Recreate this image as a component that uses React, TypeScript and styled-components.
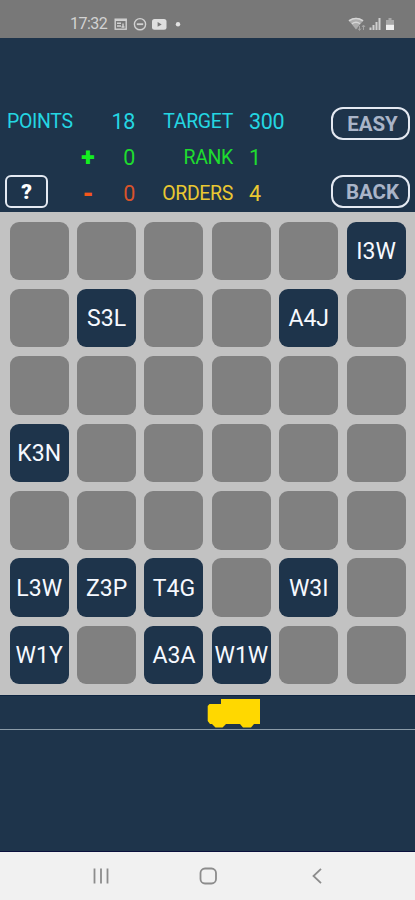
import React from 'react';
import styled, { createGlobalStyle } from 'styled-components';

const NAVY = '#1e344b';

const GlobalStyle = createGlobalStyle`
  * { box-sizing: border-box; }
  body { margin: 0; background: ${NAVY}; font-family: Roboto, "Liberation Sans", sans-serif; }
`;

const Screen = styled.main`
  width: 415px;
  height: 900px;
  display: flex;
  flex-direction: column;
  overflow: hidden;
  background: ${NAVY};
`;

const StatusBar = styled.div`
  height: 38px;
  flex: none;
  display: flex;
  align-items: center;
  padding: 10px 17px 0 70px;
  background: #787878;
  color: #d2d2d2;
`;

const Clock = styled.span`
  width: 44px;
  font-size: 16px;
  line-height: 20px;
  letter-spacing: -0.55px;
`;

const Spacer = styled.div`
  flex: 1;
`;

const ScorePanel = styled.header`
  height: 173.5px;
  flex: none;
  display: grid;
  grid-template-columns: 67px 28px 33px 98px 98px 79px;
  grid-template-rows: 36.3px 36.3px 36.3px;
  align-items: center;
  padding: 65.5px 5px 0 7px;
`;

const Label = styled.span<{ $color: string; $col: number; $row: number }>`
  grid-column: ${(p) => p.$col};
  grid-row: ${(p) => p.$row};
  justify-self: ${(p) => (p.$col === 1 ? 'start' : 'end')};
  color: ${(p) => p.$color};
  font-size: 19.5px;
  line-height: 24px;
  white-space: nowrap;
  letter-spacing: -0.35px;
`;

const Value = styled.span<{ $color: string; $col: number; $row: number }>`
  grid-column: ${(p) => p.$col};
  grid-row: ${(p) => p.$row};
  justify-self: ${(p) => (p.$col === 3 ? 'end' : 'start')};
  padding-left: ${(p) => (p.$col === 5 ? 16 : 0)}px;
  color: ${(p) => p.$color};
  font-size: 21.5px;
  line-height: 24px;
  letter-spacing: -0.3px;
`;

const Sign = styled.span<{ $color: string; $row: number }>`
  grid-column: 2;
  grid-row: ${(p) => p.$row};
  justify-self: center;
  color: ${(p) => p.$color};
  font-size: 25px;
  font-weight: 900;
  line-height: 24px;
`;

const PillButton = styled.button<{ $row: number }>`
  grid-column: 6;
  grid-row: ${(p) => p.$row};
  width: 79px;
  height: 33px;
  margin: ${(p) => (p.$row === 1 ? '4px' : '-5px')} 0 0 0;
  padding: 1px 0 0 4px;
  border: 2px solid #e4e9f2;
  border-radius: 12px;
  background: transparent;
  color: #a9b4c8;
  font: 700 20.5px/24px Roboto, sans-serif;
`;

const HelpButton = styled.button`
  grid-column: 1;
  grid-row: 3;
  width: 43px;
  height: 33px;
  margin: -5px 0 0 -2px;
  padding: 0;
  border: 2px solid #e4e9f2;
  border-radius: 6px;
  background: transparent;
  color: #fff;
  font: 900 21px/24px Roboto, sans-serif;
`;

const Board = styled.section`
  height: 483.5px;
  flex: none;
  display: grid;
  grid-template-columns: repeat(6, 59px);
  grid-auto-rows: 58.6px;
  gap: 8.8px 8.4px;
  padding: 10px 0 0 9.7px;
  background: #c2c2c2;
`;

const Tile = styled.div<{ $filled: boolean }>`
  display: flex;
  align-items: center;
  justify-content: center;
  padding-top: 2px;
  border-radius: 9px;
  background: ${(p) => (p.$filled ? NAVY : '#808080')};
  color: #f6f9ff;
  font-size: 23px;
  line-height: 26px;
  white-space: nowrap;
`;

const Road = styled.div`
  height: 34.5px;
  flex: none;
  padding: 2px 0 0 207px;
  border-top: 1px solid #0d2440;
  border-bottom: 1px solid #8b9ba8;

  svg { display: block; }
`;

const NavBar = styled.nav`
  height: 48px;
  flex: none;
  display: flex;
  align-items: center;
  justify-content: space-between;
  padding: 0 86px 0 90px;
  background: #f1f1f1;
  box-shadow: 0 -1px 0 #0a103c;
`;

const HomeIcon = styled.svg`
  margin-right: 3px;
`;

const rows = [
  ['', '', '', '', '', 'I3W'],
  ['', 'S3L', '', '', 'A4J', ''],
  ['', '', '', '', '', ''],
  ['K3N', '', '', '', '', ''],
  ['', '', '', '', '', ''],
  ['L3W', 'Z3P', 'T4G', '', 'W3I', ''],
  ['W1Y', '', 'A3A', 'W1W', '', ''],
];

const Notifications = () => (
  <svg width="70" height="16" viewBox="0 0 70 16" fill="none" stroke="#d2d2d2" strokeWidth="1.4">
    <rect x="1.2" y="3.2" width="11" height="10" />
    <path d="M1 4.2h11.4M3 7.3h4M3 10h4M9 7.5v4M7.5 11h3" />
    <circle cx="26" cy="8.2" r="5.6" />
    <path d="M22.8 8.2h6.4" strokeWidth="1.8" />
    <rect x="38" y="3" width="14.5" height="10.8" rx="2.5" fill="#dedede" stroke="none" />
    <path d="M43.6 6l4.1 2.4-4.1 2.4z" fill="#787878" stroke="none" />
    <circle cx="64" cy="8.2" r="2.2" fill="#e2e2e2" stroke="none" />
  </svg>
);

const SystemIcons = () => (
  <svg width="50" height="16" viewBox="0 0 50 16" fill="#cfcfcf">
    <path d="M.5 4.3C5 .8 11 .8 15.5 4.3L8 13.5z" opacity=".62" />
    <path d="M1 4.8Q8 .2 15 4.8M4 7.8Q8 4.8 12 7.8" fill="none" stroke="#d6d6d6" strokeWidth="1.4" />
    <path d="M11.5 10v4M10 12.5l1.5 2 1.5-2M15.5 14V9.5M14 11l1.5-2 1.5 2" fill="none" stroke="#a6a6a6" />
    <path d="M21.5 11.5h2V14h-2zM24.5 9h2v5h-2zM27.5 6h2v8h-2zM30.5 2h2v12h-2z" />
    <path d="M40.5 2h3v2H46v5h-8V4h2.5z" opacity=".55" />
    <path d="M38 8.8h8V14h-8z" fill="#efefef" />
  </svg>
);

const Van = () => (
  <svg width="54" height="31" viewBox="0 0 54 31" fill="#ffd800">
    <path d="M14 1h39v25h-6l-3 3.5h-8L33 26H19l-3.5 3.5h-7L5 26H3L.7 23V8L2.5 6H14z" />
  </svg>
);

export default function App() {
  return (
    <>
      <GlobalStyle />
      <Screen>
        <StatusBar>
          <Clock>17:32</Clock>
          <Notifications />
          <Spacer />
          <SystemIcons />
        </StatusBar>
        <ScorePanel>
          <Label $color="#24d6e2" $col={1} $row={1}>POINTS</Label>
          <Value $color="#24d6e2" $col={3} $row={1}>18</Value>
          <Label $color="#24d6e2" $col={4} $row={1}>TARGET</Label>
          <Value $color="#24d6e2" $col={5} $row={1}>300</Value>
          <PillButton $row={1}>EASY</PillButton>
          <Sign $color="#14ee20" $row={2}>+</Sign>
          <Value $color="#1fdc2f" $col={3} $row={2}>0</Value>
          <Label $color="#1fdc2f" $col={4} $row={2}>RANK</Label>
          <Value $color="#1fdc2f" $col={5} $row={2}>1</Value>
          <HelpButton>?</HelpButton>
          <Sign $color="#f4561c" $row={3}>-</Sign>
          <Value $color="#d9532a" $col={3} $row={3}>0</Value>
          <Label $color="#eac832" $col={4} $row={3}>ORDERS</Label>
          <Value $color="#eac832" $col={5} $row={3}>4</Value>
          <PillButton $row={3}>BACK</PillButton>
        </ScorePanel>
        <Board>
          {rows.flatMap((row, r) =>
            row.map((code, c) => (
              <Tile key={`${r}-${c}`} $filled={code !== ''}>{code}</Tile>
            )),
          )}
        </Board>
        <Road>
          <Van />
        </Road>
        <Spacer />
        <NavBar>
          <svg width="22" height="22" viewBox="0 0 22 22" stroke="#8c8c8c" strokeWidth="1.8">
            <path d="M4.5 3.5v15M11 3.5v15M17.5 3.5v15" />
          </svg>
          <HomeIcon width="22" height="22" viewBox="0 0 22 22" fill="none" stroke="#8c8c8c" strokeWidth="1.8">
            <rect x="3.5" y="3.5" width="15.5" height="15" rx="4.5" />
          </HomeIcon>
          <svg width="22" height="22" viewBox="0 0 22 22" fill="none" stroke="#8c8c8c" strokeWidth="1.8">
            <path d="M14 3.8L6.5 11l7.5 7.2" />
          </svg>
        </NavBar>
      </Screen>
    </>
  );
}
